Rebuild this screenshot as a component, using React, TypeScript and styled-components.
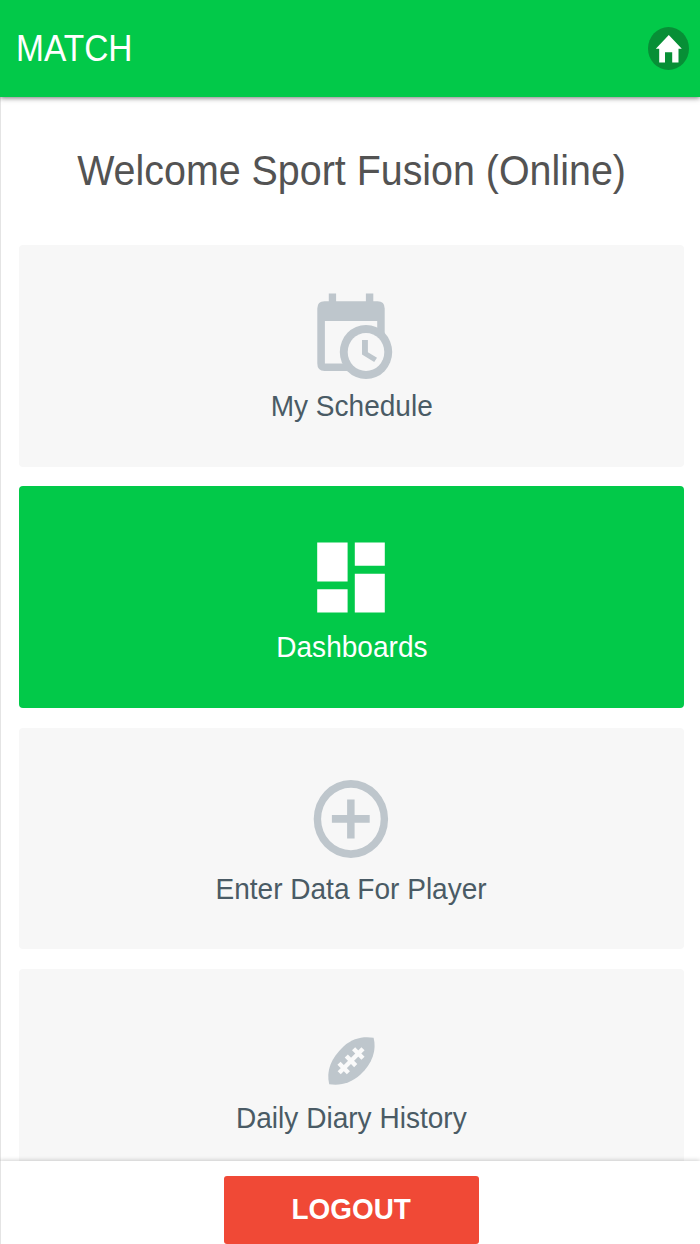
import React from "react";
import styled, { createGlobalStyle } from "styled-components";

const GlobalStyle = createGlobalStyle`
  * { box-sizing: border-box; }
  body {
    margin: 0;
    background: #fff;
    font-family: "Liberation Sans", Arial, sans-serif;
  }
`;

const Screen = styled.div`
  display: flex;
  flex-direction: column;
  width: 700px;
  height: 1244px;
  overflow: hidden;
  background: #fff;
`;

const TopBar = styled.header`
  flex: none;
  display: flex;
  align-items: center;
  justify-content: space-between;
  height: 97px;
  padding: 0 11px 0 15.5px;
  background: #02c949;
  color: #fff;
  box-shadow: 0 1px 5px rgba(0, 0, 0, 0.55);
  z-index: 1;
`;

const Text = styled.span<{ $size: number; $squeeze?: number; $origin?: string }>`
  display: block;
  font-size: ${(p) => p.$size}px;
  white-space: nowrap;
  transform: scaleX(${(p) => p.$squeeze ?? 0.957});
  transform-origin: ${(p) => p.$origin ?? "center"};
`;

const HomeButton = styled.button`
  display: flex;
  width: 41px;
  height: 43px;
  padding: 0;
  border: 0;
  background: none;
`;

const Content = styled.main`
  flex: 1;
  min-height: 0;
  overflow: hidden;
  padding: 0 16px 0 18px;
  border-left: 1px solid #e4e4e4;
`;

const Heading = styled.h1`
  display: flex;
  justify-content: center;
  margin: 0;
  height: 148px;
  line-height: 148px;
  font-weight: 400;
  color: #535353;
`;

const CardList = styled.div`
  display: flex;
  flex-direction: column;
  gap: 19.7px;
`;

const Card = styled.div<{ $active?: boolean; $compact?: boolean }>`
  flex: none;
  display: flex;
  flex-direction: column;
  align-items: center;
  height: 221.7px;
  padding-top: 40px;
  border-radius: 4px;
  line-height: 42px;
  background: ${(p) => (p.$active ? "#02c949" : "#f7f7f7")};
  color: ${(p) => (p.$active ? "#fff" : "#4a5b65")};

  svg {
    flex: none;
    width: 100px;
    height: ${(p) => (p.$compact ? 88 : 100)}px;
    margin-right: 1px;
    color: ${(p) => (p.$active ? "#fff" : "#bec6cc")};
  }
`;

const Footer = styled.footer`
  flex: none;
  display: flex;
  justify-content: center;
  height: 83px;
  padding: 15px 0 0 2px;
  border-left: 1px solid #e4e4e4;
  background: #fff;
  box-shadow: 0 -1px 4px rgba(0, 0, 0, 0.18);
  z-index: 1;
`;

const LogoutButton = styled.button`
  display: flex;
  align-items: center;
  justify-content: center;
  width: 255px;
  height: 68px;
  padding: 0 0 2px;
  border: 0;
  border-radius: 3px;
  background: #f04936;
  color: #fff;
  font-family: inherit;
  font-weight: 700;
`;

const HomeIcon = () => (
  <svg width="41" height="43" viewBox="0 0 41 43">
    <ellipse cx="20.5" cy="21.5" rx="20.5" ry="21.4" fill="#078f36" />
    <path
      fill="#fff"
      d="M20.8 8 L33.8 21.8 H30.5 V35.4 H24.2 V25.3 H17 V35.4 H11.2 V21.8 H7.8 Z"
    />
  </svg>
);

const ScheduleIcon = () => (
  <svg viewBox="-0.5 0 100 100" fill="currentColor">
    <path d="M27.3 8.4 h7.3 v7.8 h29.8 v-7.8 h7.4 v7.8 h4.2 q7.2 0 7.2 7.4 v55 q0 7.4 -7.2 7.4 H23 q-7.2 0 -7.2 -7.4 v-55 q0 -7.4 7.2 -7.4 h4.3 Z" />
    <path fill="#f7f7f7" d="M23.4 36 h52.3 v42.5 h-52.3 Z" />
    <ellipse cx="64.5" cy="67" rx="26.2" ry="27.1" />
    <ellipse cx="64.5" cy="67" rx="18.3" ry="19" fill="#f7f7f7" />
    <path d="M60.5 55 h5.9 v12.2 l9.1 5.6 l-2.8 4.2 l-12.2 -7.4 Z" />
  </svg>
);

const DashboardIcon = () => (
  <svg viewBox="-0.3 -0.4 100 100" fill="currentColor">
    <path d="M15.9 16.2 h30.4 v38.8 h-30.4 Z M53.5 16.2 h30 v23.2 h-30 Z M15.9 62.8 h30.4 v23.4 h-30.4 Z M53.5 47.4 h30 v38.8 h-30 Z" />
  </svg>
);

const AddIcon = () => (
  <svg viewBox="0 0 100 100" fill="currentColor">
    <path
      fillRule="evenodd"
      d="M12.7 51 a37.2 39 0 1 1 74.4 0 a37.2 39 0 1 1 -74.4 0 Z M20.1 51 a29.8 31.2 0 1 0 59.6 0 a29.8 31.2 0 1 0 -59.6 0 Z"
    />
    <path d="M46.1 31.4 h7.5 v15.6 h15.1 v7.8 h-15.1 v15.6 h-7.5 v-15.6 h-15.2 v-7.8 h15.2 Z" />
  </svg>
);

const FootballIcon = () => (
  <svg viewBox="0 0 100 88" fill="currentColor">
    <path d="M72.6 28.8 C62 27.3 52 29 42.5 37.5 C30 49 25 62 28.2 75.2 C40 76.8 50 74 59.5 65.5 C71.5 54.5 75.8 41 72.6 28.8 Z" />
    <g stroke="#fafafa" strokeWidth="4.4" fill="none">
      <path d="M38.2 63.8 L62 39.8" />
      <path d="M38 54.2 L47.4 63.8 M45.3 47 L54.7 56.6 M52.6 39.7 L62 49.3" />
    </g>
  </svg>
);

const items = [
  { label: "My Schedule", Icon: ScheduleIcon },
  { label: "Dashboards", Icon: DashboardIcon, active: true },
  { label: "Enter Data For Player", Icon: AddIcon },
  { label: "Daily Diary History", Icon: FootballIcon, compact: true },
];

export default function App() {
  return (
    <Screen>
      <GlobalStyle />
      <TopBar>
        <Text $size={36} $squeeze={0.93} $origin="left">MATCH</Text>
        <HomeButton aria-label="Home">
          <HomeIcon />
        </HomeButton>
      </TopBar>
      <Content>
        <Heading>
          <Text $size={42} $squeeze={0.938}>Welcome Sport Fusion (Online)</Text>
        </Heading>
        <CardList>
          {items.map(({ label, Icon, active, compact }) => (
            <Card key={label} $active={active} $compact={compact}>
              <Icon />
              <Text $size={30} $squeeze={0.935}>{label}</Text>
            </Card>
          ))}
        </CardList>
      </Content>
      <Footer>
        <LogoutButton>
          <Text $size={30} $squeeze={0.93}>LOGOUT</Text>
        </LogoutButton>
      </Footer>
    </Screen>
  );
}
